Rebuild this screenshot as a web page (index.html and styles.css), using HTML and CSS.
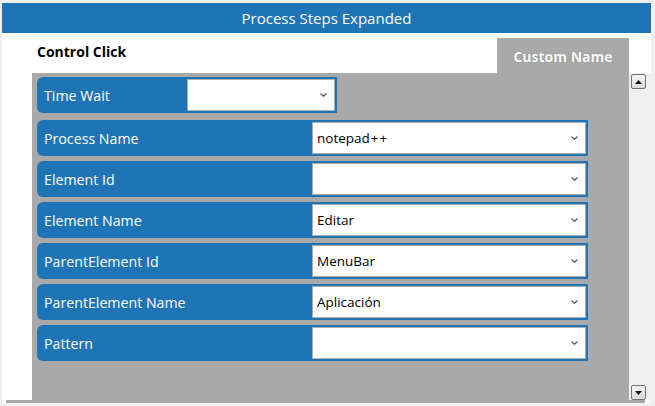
FILE: index.html
```html
<!DOCTYPE html>
<html>
<head>
<meta charset="utf-8">
<link rel="stylesheet" href="styles.css">
</head>
<body>
<div class="window">
  <header class="titlebar">Process Steps Expanded</header>
  <div class="panel">
    <div class="panel-head">
      <div class="step-name">Control Click</div>
      <div class="tab">Custom Name</div>
    </div>
    <div class="scroll">
      <div class="gutter"></div>
      <div class="content">
        <div class="row row-short">
          <div class="label label-short">Time Wait</div>
          <div class="select select-short"><span class="value"></span><svg class="chev" viewBox="0 0 7 4" width="7" height="4"><path d="M0.5 0.5 L3.5 3.3 L6.5 0.5" fill="none" stroke="#5a5a5a" stroke-width="1.2"/></svg></div>
        </div>
        <div class="row">
          <div class="label">Process Name</div>
          <div class="select"><span class="value">notepad<span class="plus">+</span><span class="plus">+</span></span><svg class="chev" viewBox="0 0 7 4" width="7" height="4"><path d="M0.5 0.5 L3.5 3.3 L6.5 0.5" fill="none" stroke="#5a5a5a" stroke-width="1.2"/></svg></div>
        </div>
        <div class="row">
          <div class="label">Element Id</div>
          <div class="select"><span class="value"></span><svg class="chev" viewBox="0 0 7 4" width="7" height="4"><path d="M0.5 0.5 L3.5 3.3 L6.5 0.5" fill="none" stroke="#5a5a5a" stroke-width="1.2"/></svg></div>
        </div>
        <div class="row">
          <div class="label">Element Name</div>
          <div class="select"><span class="value">Editar</span><svg class="chev" viewBox="0 0 7 4" width="7" height="4"><path d="M0.5 0.5 L3.5 3.3 L6.5 0.5" fill="none" stroke="#5a5a5a" stroke-width="1.2"/></svg></div>
        </div>
        <div class="row">
          <div class="label">ParentElement Id</div>
          <div class="select"><span class="value">MenuBar</span><svg class="chev" viewBox="0 0 7 4" width="7" height="4"><path d="M0.5 0.5 L3.5 3.3 L6.5 0.5" fill="none" stroke="#5a5a5a" stroke-width="1.2"/></svg></div>
        </div>
        <div class="row">
          <div class="label">ParentElement Name</div>
          <div class="select"><span class="value">Aplicación</span><svg class="chev" viewBox="0 0 7 4" width="7" height="4"><path d="M0.5 0.5 L3.5 3.3 L6.5 0.5" fill="none" stroke="#5a5a5a" stroke-width="1.2"/></svg></div>
        </div>
        <div class="row">
          <div class="label">Pattern</div>
          <div class="select"><span class="value"></span><svg class="chev" viewBox="0 0 7 4" width="7" height="4"><path d="M0.5 0.5 L3.5 3.3 L6.5 0.5" fill="none" stroke="#5a5a5a" stroke-width="1.2"/></svg></div>
        </div>
      </div>
      <div class="vscroll">
        <div class="sbtn"><svg viewBox="0 0 7 4" width="7" height="4"><path d="M0 4 L3.5 0 L7 4 Z" fill="#111"/></svg></div>
        <div class="sbtn"><svg viewBox="0 0 7 4" width="7" height="4"><path d="M0 0 L3.5 4 L7 0 Z" fill="#111"/></svg></div>
      </div>
    </div>
  </div>
  <div class="hbar"></div>
</div>
</body>
</html>
```

FILE: styles.css
```css
html, body {
  margin: 0;
  padding: 0;
}
body {
  background: #f0f0f0;
  width: 655px;
  height: 406px;
  overflow: hidden;
  font-family: "Open Sans", "Noto Sans", sans-serif;
}
.window {
  margin-left: 2px;
  width: 649px;
  height: 403px;
  background: #ffffff;
  box-sizing: border-box;
  border-top: 3px solid #f0f0f0;
}
.titlebar {
  height: 30px;
  background: #1e74b5;
  color: #ffffff;
  font-size: 15px;
  display: flex;
  align-items: center;
  justify-content: center;
}
.panel {
  background: #ffffff;
}
.panel-head {
  height: 40px;
  display: flex;
  align-items: flex-start;
}
.step-name {
  margin-left: 35px;
  margin-top: 9px;
  font-size: 14px;
  font-weight: 700;
  line-height: 19px;
  color: #000;
}
.tab {
  margin-left: auto;
  margin-right: 22px;
  margin-top: 5px;
  width: 132px;
  height: 35px;
  background: #a9a9a9;
  color: #ffffff;
  font-size: 14px;
  font-weight: 700;
  text-align: center;
  line-height: 18px;
  padding-top: 10px;
  box-sizing: border-box;
  text-shadow: 0 0 1px rgba(60,60,60,0.5);
}
.scroll {
  display: flex;
  height: 327px;
}
.gutter {
  width: 30px;
  background: #ffffff;
}
.content {
  width: 597px;
  background: #a9a9a9;
  padding: 4px 0 0 5px;
  box-sizing: border-box;
  display: flex;
  flex-direction: column;
  gap: 5px;
}
.row {
  display: flex;
  width: 551px;
  height: 36px;
  background: #1e74b5;
  border-radius: 6px 0 0 6px;
  padding: 2px 2px 2px 0;
  box-sizing: border-box;
}
.row-short {
  width: 300px;
  margin-bottom: 2px;
}
.label {
  width: 275px;
  flex: none;
  color: #ffffff;
  font-size: 14.2px;
  padding-left: 7px;
  box-sizing: border-box;
  display: flex;
  align-items: center;
}
.label-short {
  width: 150px;
}
.select {
  flex: 1;
  background: #ffffff;
  border: 1px solid #acacac;
  display: flex;
  align-items: center;
  padding: 0 7px 0 4px;
  font-size: 13.5px;
  color: #000;
}
.value {
  flex: 1;
}
.plus {
  margin-left: 1px;
}
.chev {
  flex: none;
}
.vscroll {
  width: 22px;
  background: #f0f0f0;
  display: flex;
  flex-direction: column;
  justify-content: space-between;
  padding: 1px 0 0 2px;
  box-sizing: border-box;
}
.sbtn {
  width: 15px;
  height: 15px;
  box-sizing: border-box;
  border: 1px solid #707070;
  border-radius: 2px;
  background: linear-gradient(#f6f6f6, #dadada);
  display: flex;
  align-items: center;
  justify-content: center;
}
.hbar {
  margin-left: 4px;
  width: 639px;
  height: 3px;
  background: #a9a9a9;
}
```
